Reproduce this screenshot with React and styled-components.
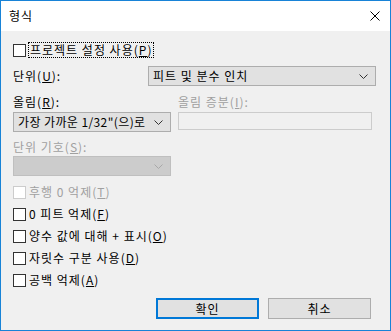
import React from 'react';
import styled, { createGlobalStyle } from 'styled-components';

const Global = createGlobalStyle`
  html, body {
    margin: 0;
    padding: 0;
    background: #ffffff;
  }
  body {
    font-family: "Noto Sans CJK KR", "Noto Sans", sans-serif;
    font-size: 12px;
    letter-spacing: 1px;
    color: #000;
  }
`;

const Window = styled.div`
  width: 391px;
  height: 331px;
  box-sizing: border-box;
  border: 1px solid #1883d7;
  display: flex;
  flex-direction: column;
  background: #f0f0f0;
`;

const TitleBar = styled.div`
  height: 30px;
  flex-shrink: 0;
  background: #ffffff;
  display: flex;
  align-items: center;
  justify-content: space-between;
  padding: 0 10px 0 8px;
`;

const Title = styled.span`
  font-size: 12px;
  line-height: 14px;
`;

const Body = styled.div`
  flex: 1;
  display: flex;
  flex-direction: column;
  padding: 8px 0 0 12px;
`;

const CheckRow = styled.label`
  height: 22px;
  display: flex;
  align-items: center;
  gap: 3px;
  color: ${p => (p.disabled ? '#a0a0a0' : '#000')};
  line-height: 14px;
`;

const Box = styled.span`
  width: 13px;
  height: 13px;
  box-sizing: border-box;
  border: 1px solid ${p => (p.disabled ? '#cccccc' : '#333333')};
  background: #ffffff;
  flex-shrink: 0;
`;

const Focus = styled.span`
  outline: 1px dotted #000;
  outline-offset: 0;
  padding: 0 1px;
`;

const UnitRow = styled.div`
  margin-top: 5px;
  display: flex;
  align-items: center;
  justify-content: space-between;
  padding-right: 14px;
`;

const Label = styled.span`
  line-height: 14px;
  color: ${p => (p.disabled ? '#a0a0a0' : '#000')};
`;

const Combo = styled.div`
  width: ${p => p.w}px;
  height: 20px;
  box-sizing: border-box;
  border: 1px solid ${p => (p.disabled ? '#bfbfbf' : '#adadad')};
  background: ${p => (p.disabled ? '#cccccc' : '#e1e1e1')};
  display: flex;
  align-items: center;
  justify-content: space-between;
  gap: 4px;
  padding: 0 7px 0 4px;
  line-height: 14px;
  white-space: nowrap;
  letter-spacing: ${p => (p.tight ? '0.4px' : '1px')};
`;

const FieldGrid = styled.div`
  margin-top: 9px;
  display: grid;
  grid-template-columns: 158px 194px;
  column-gap: 7px;
  row-gap: 3px;
  align-items: start;
`;

const TextBox = styled.div`
  height: 18px;
  box-sizing: border-box;
  border: 1px solid #cccccc;
  background: #f0f0f0;
`;

const SymbolLabel = styled(Label)`
  margin-top: 8px;
  margin-bottom: 2px;
`;

const Checks = styled.div`
  margin-top: 5px;
  display: flex;
  flex-direction: column;
`;

const Buttons = styled.div`
  margin-top: 7px;
  display: flex;
  justify-content: flex-end;
  gap: 9px;
  padding-right: 19px;
`;

const Button = styled.button`
  width: 103px;
  height: 21px;
  box-sizing: border-box;
  background: #e1e1e1;
  border: ${p => (p.primary ? '2px solid #0078d7' : '1px solid #adadad')};
  font-family: inherit;
  font-size: 12px;
  letter-spacing: 1px;
  line-height: 14px;
  color: #000;
  padding: 0;
  margin: 0;
`;

const Chevron = ({ color }) => (
  <svg width="9" height="5" viewBox="0 0 9 5" style={{ flexShrink: 0 }}>
    <polyline points="0.5,0.5 4.5,4.5 8.5,0.5" fill="none" stroke={color} strokeWidth="1" />
  </svg>
);

const Close = () => (
  <svg width="10" height="10" viewBox="0 0 10 10">
    <path d="M0.5 0.5 L9.5 9.5 M9.5 0.5 L0.5 9.5" stroke="#000" strokeWidth="1" />
  </svg>
);

const App = () => {
  return (
    <>
      <Global />
      <Window>
        <TitleBar>
          <Title>형식</Title>
          <Close />
        </TitleBar>
        <Body>
          <CheckRow>
            <Box />
            <Focus>프로젝트 설정 사용(<u>P</u>)</Focus>
          </CheckRow>
          <UnitRow>
            <Label>단위(<u>U</u>):</Label>
            <Combo w={228}>
              <span>피트 및 분수 인치</span>
              <Chevron color="#333" />
            </Combo>
          </UnitRow>
          <FieldGrid>
            <Label>올림(<u>R</u>):</Label>
            <Label disabled>올림 증분(<u>I</u>):</Label>
            <Combo w={158} tight>
              <span>가장 가까운 1/32"(으)로</span>
              <Chevron color="#333" />
            </Combo>
            <TextBox />
          </FieldGrid>
          <SymbolLabel disabled>단위 기호(<u>S</u>):</SymbolLabel>
          <Combo w={158} disabled>
            <span />
            <Chevron color="#a8a8a8" />
          </Combo>
          <Checks>
            <CheckRow disabled>
              <Box disabled />
              <span>후행 0 억제(<u>T</u>)</span>
            </CheckRow>
            <CheckRow>
              <Box />
              <span>0 피트 억제(<u>F</u>)</span>
            </CheckRow>
            <CheckRow>
              <Box />
              <span>양수 값에 대해 + 표시(<u>O</u>)</span>
            </CheckRow>
            <CheckRow>
              <Box />
              <span>자릿수 구분 사용(<u>D</u>)</span>
            </CheckRow>
            <CheckRow>
              <Box />
              <span>공백 억제(<u>A</u>)</span>
            </CheckRow>
          </Checks>
          <Buttons>
            <Button primary>확인</Button>
            <Button>취소</Button>
          </Buttons>
        </Body>
      </Window>
    </>
  );
};

export default App;
